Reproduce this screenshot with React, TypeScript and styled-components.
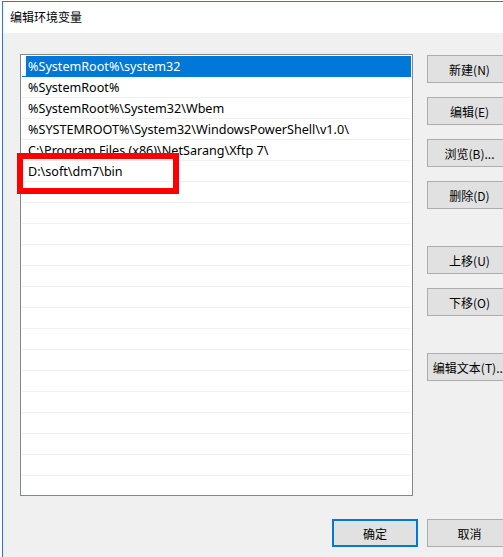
import React from "react";
import styled, { createGlobalStyle } from "styled-components";

const GlobalStyle = createGlobalStyle`
  html, body {
    margin: 0;
    padding: 0;
    width: 503px;
    height: 557px;
    overflow: hidden;
    background: #ffffff;
  }
  * { box-sizing: border-box; }
`;

const Window = styled.div`
  margin: 1px 0 0 2px;
  width: 530px;
  height: 560px;
  border-left: 1px solid #1a80d6;
  border-top: 1px solid #1a80d6;
  display: flex;
  flex-direction: column;
  font-family: "Noto Sans", "Noto Sans CJK SC", sans-serif;
  font-size: 12px;
  color: #000;
`;

const TitleBar = styled.div`
  height: 31px;
  background: #ffffff;
  padding-left: 7px;
  display: flex;
  align-items: center;
  font-family: "Noto Sans CJK SC", sans-serif;
  font-size: 12px;
  line-height: 1;
  padding-bottom: 1px;
`;

const Body = styled.div`
  flex: 1;
  background: #f0f0f0;
  padding: 21px 0 0 17px;
  width: 509px;
`;

const Content = styled.div`
  display: flex;
  gap: 14px;
  align-items: flex-start;
`;

const ListBox = styled.div`
  position: relative;
  width: 393px;
  height: 442px;
  border: 1px solid #828790;
  background: #ffffff;
  padding: 1px 1px 0 1px;
`;

const ListClip = styled.div`
  height: 100%;
  overflow: hidden;
`;

const Row = styled.div<{ $selected?: boolean }>`
  height: 21px;
  border-bottom: 1px solid #f0f0f0;
  padding-left: 6px;
  display: flex;
  align-items: center;
  white-space: nowrap;
  font-family: "Noto Sans", sans-serif;
  font-size: 12.6px;
  color: ${(p) => (p.$selected ? "#ffffff" : "#000000")};
  background: ${(p) =>
    p.$selected
      ? "linear-gradient(to right, transparent 4px, #0078d7 4px)"
      : "transparent"};
  border-bottom-color: ${(p) => (p.$selected ? "#0078d7" : "#f0f0f0")};
`;

const Highlight = styled.div`
  position: absolute;
  left: -4px;
  top: 98px;
  width: 162px;
  height: 41px;
  border: 6px solid #ff0000;
  pointer-events: none;
`;

const ButtonColumn = styled.div`
  display: flex;
  flex-direction: column;
  gap: 14px;
  padding-top: 1px;
`;

const Button = styled.button<{ $gapBefore?: number; $default?: boolean }>`
  width: ${(p) => (p.$default ? 86 : 85)}px;
  height: 28px;
  margin: 0;
  margin-top: ${(p) => p.$gapBefore ?? 0}px;
  padding: 0;
  background: #e1e1e1;
  border: ${(p) => (p.$default ? "2px solid #0078d7" : "1px solid #adadad")};
  font-family: "Noto Sans CJK SC", sans-serif;
  font-size: 12px;
  color: #000;
  white-space: nowrap;
  overflow: hidden;
  display: flex;
  align-items: center;
  justify-content: center;
  letter-spacing: 0;
`;

const Footer = styled.div`
  display: flex;
  justify-content: flex-end;
  gap: 9px;
  margin-top: 23px;
`;

const paths = [
  "%SystemRoot%\\system32",
  "%SystemRoot%",
  "%SystemRoot%\\System32\\Wbem",
  "%SYSTEMROOT%\\System32\\WindowsPowerShell\\v1.0\\",
  "C:\\Program Files (x86)\\NetSarang\\Xftp 7\\",
  "D:\\soft\\dm7\\bin",
];

const TOTAL_ROWS = 22;

export default function App() {
  const rows = Array.from({ length: TOTAL_ROWS }, (_, i) => paths[i] ?? "");
  return (
    <>
      <GlobalStyle />
      <Window>
        <TitleBar>编辑环境变量</TitleBar>
        <Body>
          <Content>
            <ListBox>
              <ListClip>
                {rows.map((r, i) => (
                  <Row key={i} $selected={i === 0}>
                    {r}
                  </Row>
                ))}
              </ListClip>
              <Highlight />
            </ListBox>
            <ButtonColumn>
              <Button>新建(N)</Button>
              <Button>编辑(E)</Button>
              <Button>浏览(B)...</Button>
              <Button>删除(D)</Button>
              <Button $gapBefore={23}>上移(U)</Button>
              <Button>下移(O)</Button>
              <Button $gapBefore={23}>编辑文本(T)...</Button>
            </ButtonColumn>
          </Content>
          <Footer>
            <Button $default>确定</Button>
            <Button>取消</Button>
          </Footer>
        </Body>
      </Window>
    </>
  );
}
